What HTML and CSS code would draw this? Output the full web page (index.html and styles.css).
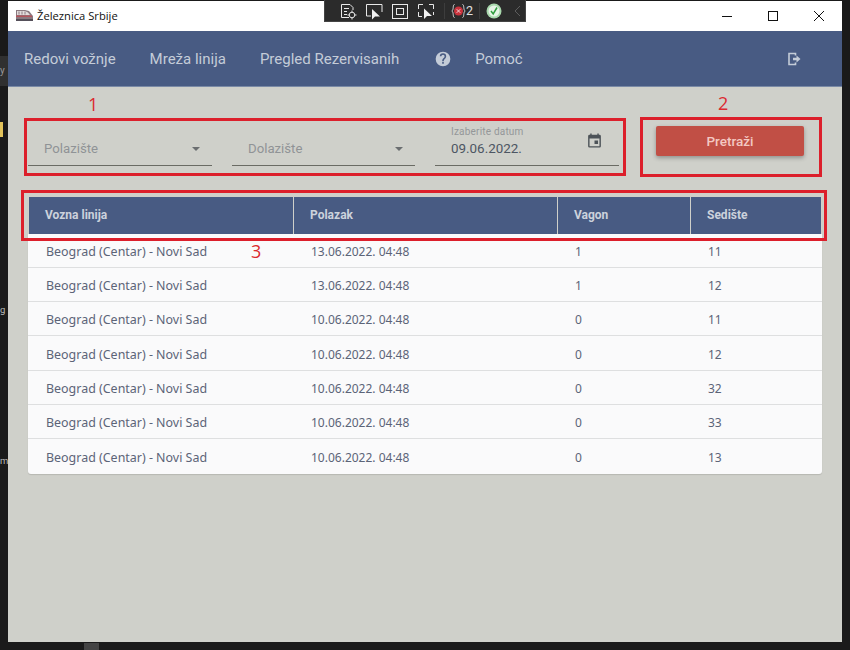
FILE: index.html
```html
<!DOCTYPE html>
<html lang="en">
<head>
  <meta charset="UTF-8" />
  <title>Železnica Srbije</title>
  <link rel="stylesheet" href="styles.css">
</head>
<body>
  <div class="desktop-strip"><span>y</span></div>
  <div class="desktop-yellow"></div>
  <div class="desktop-tab"></div>
  <span class="desktop-letter letter-g">g</span>
  <span class="desktop-letter letter-m">m</span>

  <div class="window">
    <div class="titlebar">
      <svg class="app-icon" width="17" height="12" viewBox="0 0 17 12">
        <path d="M0 0 H9 L13 1 L17 6 V9 H0 Z" fill="#8a7a80"/>
        <path d="M1 1 H9 L12 2.500 L14 5 H1 Z" fill="#e2dcdc"/>
        <path d="M3 1.500 V4.500 M6 1.500 V4.500 M9 1.500 V4.500" stroke="#8a7a80" fill="none"/>
        <rect x="0" y="5.500" width="16" height="1.500" fill="#b4545c"/>
        <rect x="0" y="9" width="17" height="2" fill="#55505a"/>
      </svg>
      <span class="app-title">Železnica Srbije</span>
      <div class="window-controls">
        <svg width="12" height="12" viewBox="0 0 12 12"><path d="M1 6.500 H11" stroke="#111" fill="none"/></svg>
        <svg width="12" height="12" viewBox="0 0 12 12"><rect x="1.500" y="1.500" width="9" height="9" stroke="#111" fill="none"/></svg>
        <svg width="12" height="12" viewBox="0 0 12 12"><path d="M1 1 L11 11 M11 1 L1 11" stroke="#111" fill="none"/></svg>
      </div>
    </div>

    <nav class="navbar">
      <a class="nav-link">Redovi vožnje</a>
      <a class="nav-link">Mreža linija</a>
      <a class="nav-link">Pregled Rezervisanih</a>
      <svg class="help-icon" width="16" height="16" viewBox="0 0 24 24"><path fill="#c4ccd8" d="M12 1a11 11 0 1 0 0 22 11 11 0 0 0 0-22zm1.200 18h-2.400v-2.400h2.400zm2.500-8.100-1.100 1.100c-.9.900-1.400 1.600-1.400 3.200h-2.400v-.6c0-1.300.5-2.500 1.400-3.400l1.500-1.500c.4-.4.7-1 .7-1.700a2.400 2.400 0 0 0-4.800 0H7.200a4.800 4.800 0 0 1 9.600 0c0 1.100-.4 2-1.100 2.900z"/></svg>
      <a class="nav-link">Pomoć</a>
      <svg class="logout-icon" width="16" height="16" viewBox="0 0 16 16">
        <path d="M9.500 4.500 V2.500 H3 V13.500 H9.500 V11.500" fill="none" stroke="#c4ccd8" stroke-width="1.600"/>
        <path d="M7 6.800 H10.500 V4.600 L14.500 8 L10.500 11.400 V9.200 H7 Z" fill="#c4ccd8"/>
      </svg>
    </nav>

    <main class="content">
      <div class="filters">
        <div class="filter-group">
          <div class="select-field select-from">
            <span class="placeholder">Polazište</span>
            <span class="caret"></span>
          </div>
          <div class="select-field select-to">
            <span class="placeholder">Dolazište</span>
            <span class="caret"></span>
          </div>
          <div class="date-field">
            <div class="date-text">
              <span class="date-label">Izaberite datum</span>
              <span class="date-value">09.06.2022.</span>
            </div>
            <svg class="calendar-icon" width="17" height="17" viewBox="0 0 24 24"><path fill="#4d5358" d="M19 4h-1V2h-2v2H8V2H6v2H5a2 2 0 0 0-2 2v14a2 2 0 0 0 2 2h14a2 2 0 0 0 2-2V6a2 2 0 0 0-2-2zm0 16H5V9h14zM12 12h5v5h-5z"/></svg>
          </div>
        </div>
        <button class="search-btn">Pretraži</button>
      </div>

      <div class="table-card">
        <div class="table-row table-head">
          <div class="cell">Vozna linija</div>
          <div class="cell">Polazak</div>
          <div class="cell">Vagon</div>
          <div class="cell">Sedište</div>
        </div>
        <div class="table-row"><div class="cell route">Beograd (Centar) - Novi Sad</div><div class="cell">13.06.2022. 04:48</div><div class="cell">1</div><div class="cell">11</div></div>
        <div class="table-row"><div class="cell route">Beograd (Centar) - Novi Sad</div><div class="cell">13.06.2022. 04:48</div><div class="cell">1</div><div class="cell">12</div></div>
        <div class="table-row"><div class="cell route">Beograd (Centar) - Novi Sad</div><div class="cell">10.06.2022. 04:48</div><div class="cell">0</div><div class="cell">11</div></div>
        <div class="table-row"><div class="cell route">Beograd (Centar) - Novi Sad</div><div class="cell">10.06.2022. 04:48</div><div class="cell">0</div><div class="cell">12</div></div>
        <div class="table-row"><div class="cell route">Beograd (Centar) - Novi Sad</div><div class="cell">10.06.2022. 04:48</div><div class="cell">0</div><div class="cell">32</div></div>
        <div class="table-row"><div class="cell route">Beograd (Centar) - Novi Sad</div><div class="cell">10.06.2022. 04:48</div><div class="cell">0</div><div class="cell">33</div></div>
        <div class="table-row"><div class="cell route">Beograd (Centar) - Novi Sad</div><div class="cell">10.06.2022. 04:48</div><div class="cell">0</div><div class="cell">13</div></div>
      </div>
    </main>
  </div>

  <!-- debug toolbar that floats over the window -->
  <div class="debug-bar">
    <svg width="20" height="20" viewBox="0 0 20 20" fill="none" stroke="#e8e8e8"><path d="M11 16.500H3.500V3.500H12L15 6.500V9"/><path d="M6 7.500h5M6 10.500h3M6 13.500h3"/><circle cx="14" cy="14" r="2.800"/><path d="M14 9.500v2M14 16.500v2M9.500 14h2M16.500 14h2"/></svg>
    <svg width="20" height="20" viewBox="0 0 20 20" fill="none"><path d="M7 15H2.500V3.500H18V11" stroke="#e8e8e8"/><path d="M8 8L8 18.500L11 15.500L16 15.500Z" fill="#f2f2f2"/></svg>
    <svg width="20" height="20" viewBox="0 0 20 20" fill="none" stroke="#e8e8e8"><rect x="2.500" y="3.500" width="15" height="14"/><rect x="6.500" y="7.500" width="7" height="6"/></svg>
    <svg width="20" height="20" viewBox="0 0 20 20" fill="none"><path d="M2.500 8V3.500H7M13 3.500H17.500V8M2.500 11V15.500H6M17.500 11V14" stroke="#e8e8e8"/><path d="M8 7.500L8 18L11 15L16 15Z" fill="#f2f2f2"/></svg>
    <span class="bar-sep"></span>
    <span class="debug-errors">
      <svg width="15" height="16" viewBox="0 0 15 16"><path d="M3.500 1.500C1.500 1.500 3 7 .8 8C3 9 1.500 14.500 3.500 14.500M11.500 1.500C13.500 1.500 12 7 14.200 8C12 9 13.500 14.500 11.500 14.500" fill="none" stroke="#d8d8d8"/><circle cx="7.500" cy="8" r="4.500" fill="#c8323c"/><path d="M5.700 6.200l3.600 3.600M9.300 6.200l-3.600 3.600" stroke="#f4d0d0"/></svg>
      <span>2</span>
    </span>
    <span class="bar-sep"></span>
    <span class="ok-icon">
      <svg width="16" height="16" viewBox="0 0 16 16"><circle cx="8" cy="8" r="7.500" fill="#a9d8ad"/><circle cx="8" cy="8" r="5.500" fill="#e6f4e6"/><path d="M5 8l2.200 3L11 4.500" fill="none" stroke="#2f9c3e" stroke-width="1.500"/></svg>
    </span>
    <svg class="bar-chevron" width="10" height="14" viewBox="0 0 10 14"><path d="M8 2L3 7L8 12" fill="none" stroke="#5c5c5c"/></svg>
  </div>

  <!-- red annotations drawn over the screenshot -->
  <div class="mark mark-filters"></div>
  <div class="mark mark-search"></div>
  <div class="mark mark-head"></div>
  <span class="mark-num num-1">1</span>
  <span class="mark-num num-2">2</span>
  <span class="mark-num num-3">3</span>
</body>
</html>
```

FILE: styles.css
```css
* {
  box-sizing: border-box;
}

html,
body {
  height: 100%;
}

body {
  margin: 0;
  position: relative;
  overflow: hidden;
  background-color: #1a1a1a;
  font-family: Roboto, "Liberation Sans", sans-serif;
  padding: 1px 8px 8px;
}

.window {
  display: flex;
  flex-direction: column;
  height: 641px;
  background-color: #cfd0ca;
}

.titlebar {
  display: flex;
  align-items: center;
  height: 30px;
  flex-shrink: 0;
  padding: 0 0 1px 8px;
  background-color: #fff;
}

.app-icon {
  margin-right: 4px;
}

.app-title {
  font-family: "Open Sans", sans-serif;
  font-size: 11.200px;
  color: #111;
}

.window-controls {
  display: flex;
  gap: 34px;
  margin-left: auto;
  margin-right: 17px;
}

.navbar {
  display: flex;
  align-items: center;
  height: 56px;
  flex-shrink: 0;
  padding: 0 40px 0 16px;
  background-color: #485b83;
  border-bottom: 1px solid #7a8aa6;
}

.nav-link {
  margin-right: 34px;
  font-size: 15px;
  color: #c4ccd8;
}

.help-icon {
  margin-left: 2px;
  margin-right: 24px;
}

.logout-icon {
  margin-left: auto;
}

.content {
  padding: 32px 20px 0;
}

.filters {
  display: flex;
  align-items: flex-start;
  height: 78px;
}

.filter-group {
  display: flex;
  padding-top: 3px;
}

.select-field {
  display: flex;
  align-items: center;
  justify-content: space-between;
  height: 44px;
  padding: 10px 12px 0 16px;
  border-bottom: 1px solid #6a6b64;
}

.select-from {
  width: 184px;
  margin-right: 20px;
}

.select-to {
  width: 183px;
  margin-right: 20px;
}

.placeholder {
  font-size: 13.200px;
  color: #8f9396;
}

.caret {
  width: 0;
  height: 0;
  border-left: 4.500px solid transparent;
  border-right: 4.500px solid transparent;
  border-top: 4.500px solid #6b6e70;
}

.date-field {
  display: flex;
  justify-content: space-between;
  width: 184px;
  height: 44px;
  padding: 0 16px;
  border-bottom: 1px solid #6a6b64;
}

.date-text {
  display: flex;
  flex-direction: column;
}

.date-label {
  font-size: 10px;
  letter-spacing: 0.2px;
  line-height: 12px;
  margin-top: 4px;
  color: #949799;
}

.date-value {
  font-size: 13.400px;
  line-height: 18px;
  margin-top: 2px;
  color: #4d5663;
}

.calendar-icon {
  margin-top: 10px;
}

.search-btn {
  width: 148px;
  height: 30px;
  margin-left: 37px;
  margin-top: 7px;
  border: none;
  border-radius: 2px;
  background-color: #c14f45;
  box-shadow: 0 2px 4px rgba(0, 0, 0, 0.3);
  color: #f3c8c2;
  font-family: Roboto, sans-serif;
  font-size: 13.500px;
  font-weight: 500;
}

.table-card {
  border-radius: 0 0 3px 3px;
  background-color: #fafafb;
  box-shadow: 0 1px 1px rgba(0, 0, 0, 0.12);
}

.table-row {
  display: grid;
  grid-template-columns: 265px 264px 133px 1fr;
  height: 34.300px;
  border-bottom: 1px solid #dedfe0;
}

.table-row:last-child {
  border-bottom: none;
}

.cell {
  display: flex;
  align-items: center;
  padding-top: 2px;
  padding-left: 18px;
  font-family: "Noto Sans", sans-serif;
  font-size: 12px;
  color: #5c6478;
}

.route {
  font-size: 12.450px;
}

.table-head {
  height: 36.500px;
  padding-right: 1px;
  border-bottom: none;
  background-color: #cfd0ca;
}

.table-head .cell {
  padding-top: 0;
  padding-left: 16px;
  margin-left: 1px;
  background-color: #485b83;
  font-family: Roboto, sans-serif;
  font-size: 12px;
  font-weight: 700;
  color: #ccd2dc;
}

/* desktop behind the window */
.desktop-strip {
  position: absolute;
  left: 0;
  top: 56px;
  width: 8px;
  height: 30px;
  background-color: #303030;
  color: #999;
  font-size: 10px;
  line-height: 30px;
}

.desktop-yellow {
  position: absolute;
  left: 0;
  top: 122px;
  width: 3px;
  height: 15px;
  background-color: #e2c25a;
}

.desktop-tab {
  position: absolute;
  left: 84px;
  top: 643px;
  width: 15px;
  height: 7px;
  background-color: #444;
}

.desktop-letter {
  position: absolute;
  left: 0;
  color: #bbb;
  font-size: 9.500px;
}

.letter-g {
  top: 304px;
}

.letter-m {
  top: 455px;
}

/* floating debug toolbar */
.debug-bar {
  position: absolute;
  left: 324px;
  top: 0;
  width: 202px;
  height: 22px;
  display: flex;
  align-items: center;
  gap: 6px;
  padding-left: 13px;
  background-color: #2b2b2b;
  border: 1px solid #444;
  border-top: none;
}

.bar-sep {
  width: 1px;
  height: 16px;
  margin-left: 2px;
  background-color: #3d3d3d;
}

.debug-errors {
  display: flex;
  align-items: center;
  color: #e0e0e0;
  font-size: 12.500px;
}

.debug-errors + .bar-sep {
  margin-left: 0;
}

.ok-icon {
  display: flex;
}

.bar-chevron {
  margin-left: 4px;
}

/* red annotations */
.mark {
  position: absolute;
  border: 3px solid #dc1f2b;
}

.mark-filters {
  left: 24px;
  top: 118px;
  width: 602px;
  height: 58px;
}

.mark-search {
  left: 640px;
  top: 117px;
  width: 182px;
  height: 60px;
}

.mark-head {
  left: 21px;
  top: 190px;
  width: 806px;
  height: 51px;
}

.mark-num {
  position: absolute;
  font-family: "Open Sans", sans-serif;
  font-size: 18px;
  color: #dc2a30;
}

.num-1 {
  left: 88px;
  top: 92px;
}

.num-2 {
  left: 718px;
  top: 91px;
}

.num-3 {
  left: 251px;
  top: 239px;
}
```
